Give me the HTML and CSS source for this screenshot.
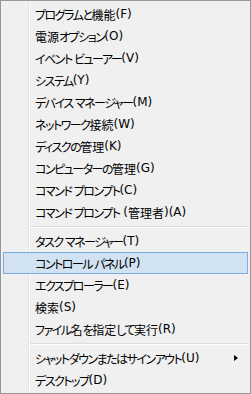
FILE: index.html
```html
<!DOCTYPE html>
<html lang="ja">
<head>
    <meta charset="UTF-8">
    <title>クイック リンク メニュー</title>
    <link rel="stylesheet" href="styles.css">
</head>
<body>
    <div class="menu">
        <div class="item">プログラムと<span class="kj">機能</span><span class="key">(F)</span></div>
        <div class="item"><span class="kj">電源</span>オプション<span class="key">(O)</span></div>
        <div class="item">イベント ビューアー<span class="key">(V)</span></div>
        <div class="item">システム<span class="key">(Y)</span></div>
        <div class="item">デバイス マネージャー<span class="key">(M)</span></div>
        <div class="item">ネットワーク<span class="kj">接続</span><span class="key">(W)</span></div>
        <div class="item">ディスクの<span class="kj">管理</span><span class="key">(K)</span></div>
        <div class="item">コンピューターの<span class="kj">管理</span><span class="key">(G)</span></div>
        <div class="item">コマンド プロンプト<span class="key">(C)</span></div>
        <div class="item">コマンド プロンプト<span class="key"> (</span><span class="kj">管理者</span><span class="key">)(A)</span></div>
        <div class="separator"></div>
        <div class="item">タスク マネージャー<span class="key">(T)</span></div>
        <div class="item hover">コントロール パネル<span class="key">(P)</span></div>
        <div class="item">エクスプローラー<span class="key">(E)</span></div>
        <div class="item"><span class="kj">検索</span><span class="key">(S)</span></div>
        <div class="item">ファイル<span class="kj">名</span>を<span class="kj">指定</span>して<span class="kj">実行</span><span class="key">(R)</span></div>
        <div class="separator"></div>
        <div class="item">シャットダウンまたはサインアウト<span class="key">(U)</span><span class="arrow"></span></div>
        <div class="item">デスクトップ<span class="key">(D)</span></div>
    </div>
</body>
</html>
```

FILE: styles.css
```css
body {
    margin: 0;
    background: #f0f0f0;
}

.menu {
    box-sizing: border-box;
    width: 251px;
    height: 394px;
    padding: 2px;
    border: 1px solid #979797;
    background: #f0f0f0;
    /* アイコン欄の縦線 */
    background-image: linear-gradient(to right, transparent 27px, #e2e3e3 27px, #e2e3e3 28px, #ffffff 28px, #ffffff 29px, transparent 29px);
    background-clip: content-box;
    font-family: "DejaVu Sans", "Noto Sans CJK JP", sans-serif;
    font-size: 12px;
    font-feature-settings: "palt";
    color: #000;
}

.item {
    box-sizing: border-box;
    display: flex;
    align-items: center;
    height: 22px;
    padding-left: 31px;
    border: 1px solid transparent;
    white-space: pre;
    letter-spacing: -1.5px;
}

/* 漢字と英字はそのままの幅で */
.kj,
.key {
    letter-spacing: 0;
}

.item.hover {
    background: #d1e2f2;
    border-color: #78aee5;
}

.separator {
    height: 1px;
    margin: 3px 0 3px 27px;
    background: #dcdcdc;
    box-shadow: 0 1px 0 #ffffff;
}

.arrow {
    margin-left: auto;
    margin-right: 9px;
    width: 0;
    height: 0;
    border-top: 3.5px solid transparent;
    border-bottom: 3.5px solid transparent;
    border-left: 4px solid #000;
}
```
